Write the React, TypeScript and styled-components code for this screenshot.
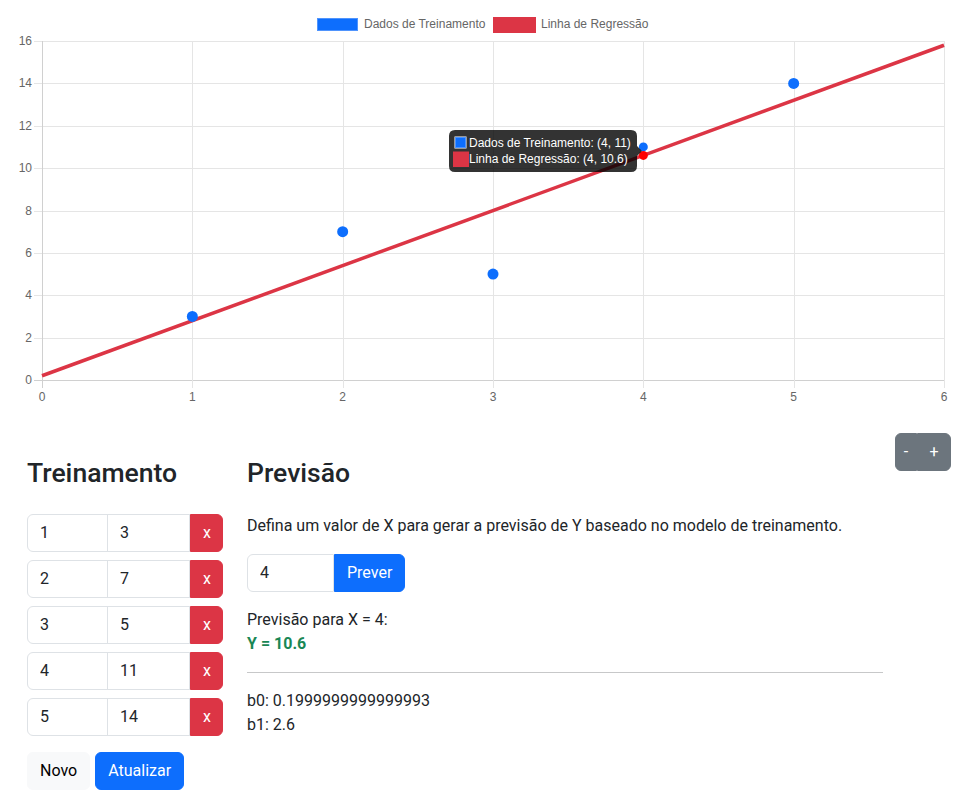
import React from "react";
import styled, { createGlobalStyle } from "styled-components";

const Global = createGlobalStyle`
  html, body { margin: 0; padding: 0; background: #fff; }
  body {
    font-family: Roboto, "Noto Sans", "Liberation Sans", sans-serif;
    font-size: 16px;
    line-height: 1.5;
    color: #212529;
  }
  * { box-sizing: border-box; }
`;

const ChartWrap = styled.div`
  width: 959px;
  height: 433px;
`;

const Section = styled.div`
  display: flex;
  align-items: flex-start;
  padding: 0 8px 0 27px;
`;

const LeftCol = styled.div`
  width: 196px;
  flex: none;
`;

const MidCol = styled.div`
  width: 636px;
  margin-left: 24px;
  flex: none;
`;

const Heading = styled.h3`
  margin: 24px 0 25px;
  font-size: 26.55px;
  font-weight: 500;
  line-height: 1.2;
`;

const Rows = styled.div`
  display: flex;
  flex-direction: column;
  gap: 8px;
`;

const InputGroup = styled.div<{ $cols: string }>`
  display: grid;
  grid-template-columns: ${(p) => p.$cols};
  height: 38px;
`;

const Field = styled.input<{ $first?: boolean }>`
  min-width: 0;
  height: 38px;
  padding: 6px 12px;
  font: inherit;
  font-size: 16px;
  color: #212529;
  background: #fff;
  border: 1px solid #dee2e6;
  border-radius: ${(p) => (p.$first ? "6px 0 0 6px" : "0")};
  margin-left: ${(p) => (p.$first ? "0" : "-1px")};
  outline: none;
`;

const Btn = styled.button<{ $variant: "danger" | "primary" | "light" | "secondary"; $radius?: string }>`
  height: 38px;
  padding: 0 12px;
  font: inherit;
  font-size: 16px;
  line-height: 1.5;
  border-radius: ${(p) => p.$radius ?? "6px"};
  cursor: pointer;
  ${(p) =>
    p.$variant === "danger"
      ? "background:#dc3545;border:1px solid #dc3545;color:#fff;"
      : p.$variant === "primary"
      ? "background:#0d6efd;border:1px solid #0d6efd;color:#fff;"
      : p.$variant === "secondary"
      ? "background:#6c757d;border:1px solid #6c757d;color:#fff;"
      : "background:#f8f9fa;border:1px solid #f8f9fa;color:#000;"}
`;

const ZoomGroup = styled.div`
  display: flex;
  margin-left: 12px;
`;

const ZoomBtn = styled(Btn)<{ $w: number }>`
  width: ${(p) => p.$w}px;
  padding: 0;
  text-align: center;
`;

const Actions = styled.div`
  display: flex;
  gap: 5px;
  margin-top: 16px;
`;

const Text = styled.p`
  margin: 0 0 16px;
`;

const Result = styled.p`
  margin: 16px 0 0;
`;

const Strong = styled.strong`
  color: #198754;
  font-weight: 700;
`;

const Rule = styled.hr`
  margin: 16px 0;
  border: 0;
  border-top: 1px solid #212529;
  opacity: 0.25;
`;

const Coef = styled.div`
  line-height: 24px;
`;

const data: [number, number][] = [
  [1, 3],
  [2, 7],
  [3, 5],
  [4, 11],
  [5, 14],
];

const sx = (v: number) => 42 + (v * 902) / 6;
const sy = (v: number) => 380 - (v * 339) / 16;

function Chart() {
  const yt = [0, 2, 4, 6, 8, 10, 12, 14, 16];
  const xt = [0, 1, 2, 3, 4, 5, 6];
  const grid = "#e5e5e5";
  const ff = "'Liberation Sans', Arial, sans-serif";
  return (
    <svg width={959} height={433} viewBox="0 0 959 433">
      {/* legend */}
      <rect x={317.5} y={18.5} width={40} height={12} fill="#0d6efd" stroke="#4f94fd" strokeWidth={1} />
      <text x={364} y={28} fontFamily={ff} fontSize={12} fill="#666">
        Dados de Treinamento
      </text>
      <rect x={494.5} y={18.5} width={40} height={13} fill="#dc3545" stroke="#dc3545" strokeWidth={3} />
      <text x={541} y={28} fontFamily={ff} fontSize={12} fill="#666">
        Linha de Regressão
      </text>

      {/* grid */}
      {yt.map((v) => (
        <line key={"h" + v} x1={34} x2={944} y1={Math.round(sy(v)) + 0.5} y2={Math.round(sy(v)) + 0.5} stroke={v === 0 ? "#d0d0d0" : grid} strokeWidth={1} />
      ))}
      {xt.map((v) => (
        <line key={"v" + v} x1={Math.round(sx(v)) + 0.5} x2={Math.round(sx(v)) + 0.5} y1={41} y2={388} stroke={v === 0 ? "#d0d0d0" : grid} strokeWidth={1} />
      ))}
      {yt.map((v) => (
        <text key={"yl" + v} x={32} y={sy(v) + 4} textAnchor="end" fontFamily={ff} fontSize={12} fill="#666">
          {v}
        </text>
      ))}
      {xt.map((v) => (
        <text key={"xl" + v} x={sx(v)} y={401} textAnchor="middle" fontFamily={ff} fontSize={12} fill="#666">
          {v}
        </text>
      ))}

      {/* regression line */}
      <line x1={sx(0)} y1={sy(0.2)} x2={sx(6)} y2={sy(15.8)} stroke="#dc3545" strokeWidth={3.5} />

      {/* points */}
      {data.map(([x, y]) => (
        <circle key={x} cx={sx(x)} cy={sy(y)} r={x === 4 ? 4.5 : 5.5} fill="#0d6efd" />
      ))}
      <circle cx={sx(4)} cy={sy(10.6)} r={4.5} fill="#ff0000" />

      {/* tooltip */}
      <path
        d="M455 130 H631 Q637 130 637 136 V146 L642 151 L637 156 V166 Q637 172 631 172 H455 Q449 172 449 166 V136 Q449 130 455 130 Z"
        fill="rgba(0,0,0,0.8)"
      />
      <rect x={454.5} y={136.5} width={12} height={12} fill="#fff" />
      <rect x={455.5} y={137.5} width={10} height={10} fill="#0d6efd" stroke="#4f94fd" strokeWidth={1} />
      <rect x={453} y={151.5} width={16} height={15.5} fill="#dc3545" />
      <text x={469} y={146.5} fontFamily={ff} fontSize={12} fill="#fff">
        Dados de Treinamento: (4, 11)
      </text>
      <text x={469} y={162.5} fontFamily={ff} fontSize={12} fill="#fff">
        Linha de Regressão: (4, 10.6)
      </text>
    </svg>
  );
}

export default function App() {
  return (
    <>
      <Global />
      <ChartWrap>
        <Chart />
      </ChartWrap>
      <Section>
        <LeftCol>
          <Heading>Treinamento</Heading>
          <Rows>
            {data.map(([x, y]) => (
              <InputGroup key={x} $cols="81px 82px 33px">
                <Field $first defaultValue={String(x)} />
                <Field defaultValue={String(y)} />
                <Btn $variant="danger" $radius="0 6px 6px 0">x</Btn>
              </InputGroup>
            ))}
          </Rows>
          <Actions>
            <Btn $variant="light">Novo</Btn>
            <Btn $variant="primary">Atualizar</Btn>
          </Actions>
        </LeftCol>
        <MidCol>
          <Heading>Previsão</Heading>
          <Text>Defina um valor de X para gerar a previsão de Y baseado no modelo de treinamento.</Text>
          <InputGroup $cols="87px 71px">
            <Field $first defaultValue="4" />
            <Btn $variant="primary" $radius="0 6px 6px 0">Prever</Btn>
          </InputGroup>
          <Result>
            Previsão para X = 4:
            <br />
            <Strong>Y = 10.6</Strong>
          </Result>
          <Rule />
          <Coef>b0: 0.1999999999999993</Coef>
          <Coef>b1: 2.6</Coef>
        </MidCol>
        <ZoomGroup>
          <ZoomBtn $variant="secondary" $w={22} $radius="6px 0 0 6px">-</ZoomBtn>
          <ZoomBtn $variant="secondary" $w={34} $radius="0 6px 6px 0">+</ZoomBtn>
        </ZoomGroup>
      </Section>
    </>
  );
}
